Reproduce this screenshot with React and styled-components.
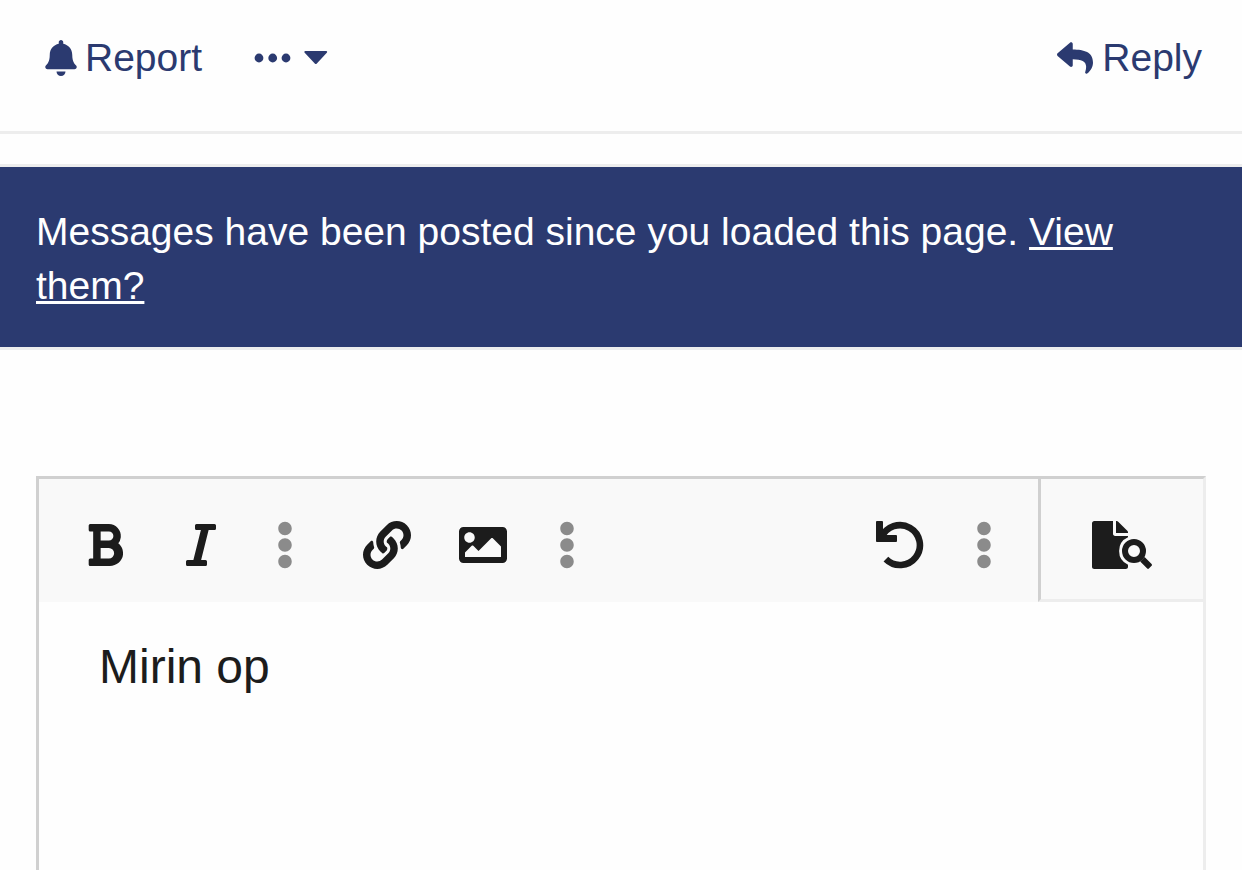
import React, { useState } from "react";
import styled, { createGlobalStyle } from "styled-components";
import {
  FaBell,
  FaBold,
  FaEllipsisV,
  FaImage,
  FaItalic,
  FaLink,
  FaReply,
} from "react-icons/fa";

const GlobalStyle = createGlobalStyle`
  * {
    box-sizing: border-box;
  }

  body {
    margin: 0;
    background: #fefefe;
    font-family: "Liberation Sans", Arial, sans-serif;
  }
`;

const Page = styled.div`
  display: flex;
  flex-direction: column;
  min-height: 100vh;
`;

const ActionBar = styled.div`
  display: flex;
  justify-content: space-between;
  padding: 31px 40px 46px 43px;
  border-bottom: 3px solid #ededed;
`;

const ActionGroup = styled.div`
  display: flex;
  gap: 52px;
`;

const ActionButton = styled.button`
  display: flex;
  align-items: center;
  gap: ${(props) => props.$gap}px;
  padding: 0;
  border: none;
  background: none;
  color: #2b3a70;
  font-family: inherit;
  font-size: 39px;
  line-height: 54px;
  cursor: pointer;
`;

const Notice = styled.div`
  margin: 30px 0 126px 0;
  padding: 38px 36px 34px 36px;
  border: solid #ededed;
  border-width: 3px 0;
  background: #2b3a70;
  color: white;
  font-size: 39px;
  line-height: 54px;
`;

const NoticeLink = styled.a`
  color: white;
  text-decoration: underline;
`;

const Editor = styled.div`
  display: flex;
  flex-direction: column;
  flex: 1;
  margin: 0 36px;
  border: 3px solid #d0d0d0;
  border-right-color: #ededed;
  border-bottom: none;
`;

const Toolbar = styled.div`
  display: flex;
  background: #f9f9f9;
`;

const Tools = styled.div`
  display: flex;
  flex: 1;
  gap: 18px;
  padding: 0 18px;
`;

const ToolGroup = styled.div`
  display: flex;
  margin-left: ${(props) => (props.$end ? "auto" : "0")};
`;

const ToolButton = styled.button`
  display: flex;
  justify-content: center;
  width: ${(props) => (props.$more ? 72 : 96)}px;
  padding: 42px 0 33px 0;
  border: none;
  background: none;
  color: ${(props) => (props.$more ? "#8b8b8b" : "#1c1c1c")};
  cursor: pointer;
`;

const PreviewButton = styled(ToolButton)`
  width: 165px;
  padding-bottom: 30px;
  border: solid #ededed;
  border-width: 0 0 3px 3px;
  border-left-color: #d0d0d0;
`;

const MessageInput = styled.textarea`
  flex: 1;
  width: 100%;
  padding: 31px 60px 0 60px;
  border: none;
  outline: none;
  resize: none;
  background: #fefefe;
  color: #1c1c1c;
  font-family: inherit;
  font-size: 48px;
  line-height: 68px;
`;

function DotsIcon() {
  return (
    <svg width="37" height="10" viewBox="0 0 37 10" fill="currentColor">
      <circle cx="5" cy="5" r="4.4" />
      <circle cx="18.7" cy="5" r="4.4" />
      <circle cx="32" cy="5" r="4.4" />
    </svg>
  );
}

function CaretIcon() {
  return (
    <svg width="24" height="14" viewBox="0 0 24 14" fill="currentColor">
      <path d="M1.4 0h20.8c1 0 1.3 1 .6 1.7L12.6 12.7c-.5.5-1.1.5-1.6 0L.7 1.7C0 1 .4 0 1.4 0z" />
    </svg>
  );
}

function UndoIcon() {
  return (
    <svg width="48" height="48" viewBox="0 0 48 48" fill="none">
      <path
        d="M5.6 16.5A19.9 19.9 0 1 1 9.9 38.1"
        stroke="currentColor"
        strokeWidth="6.6"
      />
      <path
        d="M1.2 0h4.6C6.600 0 7 .4 7 1.200V14h12.800c.8 0 1.200.4 1.200 1.200v4.600c0 .8-.4 1.200-1.200 1.200H1.200C.4 21 0 20.600 0 19.800V1.200C0 .4.4 0 1.200 0z"
        fill="currentColor"
      />
    </svg>
  );
}

function FileSearchIcon() {
  return (
    <svg width="60" height="48" viewBox="0 0 60 48" fill="none">
      <path
        d="M2.3 0H21v12.8c0 1.3.9 2.2 2.2 2.2H36v1.3A15 15 0 0 0 36 43.7v2c0 1.3-1 2.3-2.3 2.3H2.3C1 48 0 47 0 45.7V2.3C0 1 1 0 2.300 0z"
        fill="currentColor"
      />
      <path
        d="M24 0h.6c.6 0 1.2.2 1.6.7l9.1 9.1c.5.4.7 1 .7 1.600v.6H24z"
        fill="currentColor"
      />
      <circle cx="42" cy="30" r="9" stroke="currentColor" strokeWidth="6" />
      <path
        d="M52.600 36l7 7.100c.5.500.5 1.200 0 1.700l-2.700 2.700c-.5.5-1.200.5-1.700 0l-7-7.100z"
        fill="currentColor"
      />
    </svg>
  );
}

function MoreButton({ label }) {
  return (
    <ToolButton type="button" aria-label={label} $more>
      <FaEllipsisV size={48} />
    </ToolButton>
  );
}

export default function ThreadReply() {
  const [message, setMessage] = useState("Mirin op");

  return (
    <Page>
      <GlobalStyle />
      <ActionBar>
        <ActionGroup>
          <ActionButton type="button" $gap={6}>
            <FaBell size={36} />
            Report
          </ActionButton>
          <ActionButton type="button" aria-label="More actions" $gap={13}>
            <DotsIcon />
            <CaretIcon />
          </ActionButton>
        </ActionGroup>
        <ActionButton type="button" $gap={9}>
          <FaReply size={36} />
          Reply
        </ActionButton>
      </ActionBar>
      <Notice>
        Messages have been posted since you loaded this page.{" "}
        <NoticeLink href="#new">View them?</NoticeLink>
      </Notice>
      <Editor>
        <Toolbar>
          <Tools>
            <ToolGroup>
              <ToolButton type="button" aria-label="Bold">
                <FaBold size={48} />
              </ToolButton>
              <ToolButton type="button" aria-label="Italic">
                <FaItalic size={48} />
              </ToolButton>
              <MoreButton label="More text options" />
            </ToolGroup>
            <ToolGroup>
              <ToolButton type="button" aria-label="Insert link">
                <FaLink size={48} />
              </ToolButton>
              <ToolButton type="button" aria-label="Insert image">
                <FaImage size={48} />
              </ToolButton>
              <MoreButton label="More insert options" />
            </ToolGroup>
            <ToolGroup $end>
              <ToolButton type="button" aria-label="Undo">
                <UndoIcon />
              </ToolButton>
              <MoreButton label="More options" />
            </ToolGroup>
          </Tools>
          <PreviewButton type="button" aria-label="Preview">
            <FileSearchIcon />
          </PreviewButton>
        </Toolbar>
        <MessageInput
          aria-label="Message"
          value={message}
          onChange={(e) => setMessage(e.target.value)}
        />
      </Editor>
    </Page>
  );
}
